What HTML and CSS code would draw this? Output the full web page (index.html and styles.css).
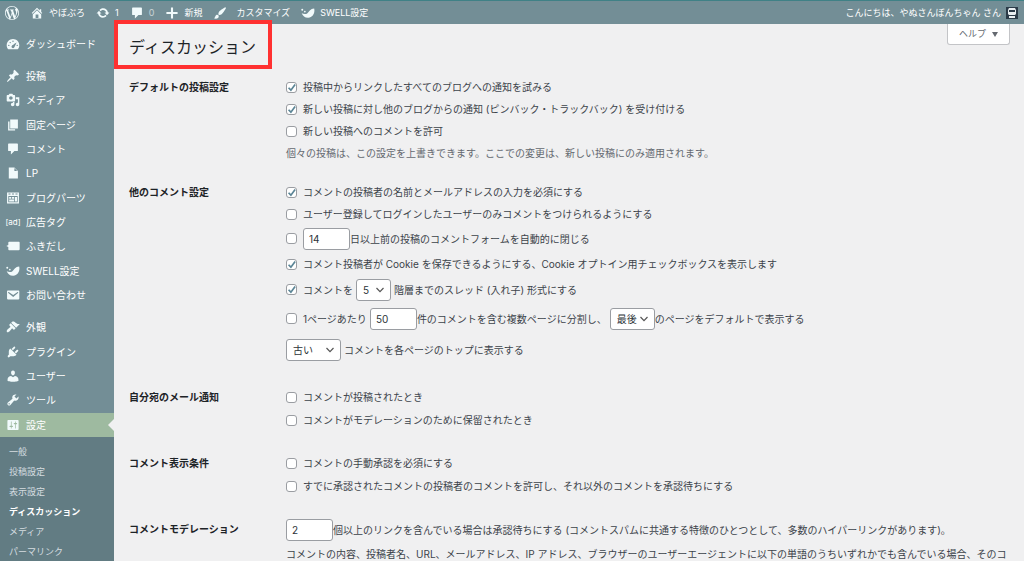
FILE: index.html
```html
<!DOCTYPE html>
<html lang="ja">
<head>
<meta charset="utf-8">
<meta name="viewport" content="width=device-width, initial-scale=1">
<title>ディスカッション</title>
<link rel="stylesheet" href="styles.css">
</head>
<body>
<svg class="sprite" aria-hidden="true">
  <symbol id="i-wp" viewBox="0 0 20 20"><path d="M20 10c0-5.51-4.49-10-10-10C4.48 0 0 4.49 0 10c0 5.52 4.48 10 10 10 5.51 0 10-4.48 10-10zM7.78 15.37L4.37 6.22c.55-.02 1.17-.08 1.17-.08.5-.06.44-1.13-.06-1.11 0 0-1.45.11-2.37.11-.18 0-.37 0-.58-.01C4.12 2.69 6.87 1.11 10 1.11c2.33 0 4.45.87 6.05 2.34-.68-.11-1.65.39-1.65 1.58 0 .74.45 1.36.9 2.1.35.61.55 1.36.55 2.46 0 1.49-1.4 5-1.4 5l-3.03-8.37c.54-.02.82-.17.82-.17.5-.05.44-1.25-.06-1.22 0 0-1.44.12-2.38.12-.87 0-2.33-.12-2.33-.12-.5-.03-.56 1.2-.06 1.22l.92.08 1.26 3.41zM17.41 10c.24-.64.74-1.87.43-4.25.7 1.29 1.05 2.71 1.05 4.25 0 3.29-1.73 6.24-4.4 7.78.97-2.59 1.94-5.2 2.92-7.78zM6.1 18.09C3.12 16.65 1.11 13.53 1.11 10c0-1.3.23-2.48.72-3.59C3.25 10.3 4.67 14.2 6.1 18.09zm4.03-6.63l2.58 6.98c-.86.29-1.76.45-2.71.45-.79 0-1.57-.11-2.29-.33.81-2.38 1.62-4.74 2.42-7.1z"/></symbol>
  <symbol id="i-home" viewBox="0 0 20 20"><path d="M16 8.5l1.53 1.53-1.06 1.06L10 4.6l-6.47 6.49-1.06-1.06L10 2.5l4 4v-2h2v4zm-6-2.46l6 5.99V18H4v-5.97zM12 17v-5H8v5h4z"/></symbol>
  <symbol id="i-update" viewBox="0 0 20 20"><path d="M10.2 3.28c3.53 0 6.43 2.61 6.92 6h2.08l-3.5 4-3.5-4h2.32c-.45-1.97-2.21-3.45-4.32-3.45-1.45 0-2.73.71-3.54 1.78L4.95 5.66C6.23 4.2 8.11 3.28 10.2 3.28zm-.4 13.44c-3.52 0-6.43-2.61-6.92-6H.8l3.5-4c1.17 1.33 2.33 2.67 3.5 4H5.48c.45 1.97 2.21 3.45 4.32 3.45 1.45 0 2.73-.71 3.54-1.78l1.71 1.95c-1.28 1.46-3.15 2.38-5.25 2.38z"/></symbol>
  <symbol id="i-comment" viewBox="0 0 20 20"><path d="M4 2h12c.55 0 1 .45 1 1v9c0 .55-.45 1-1 1h-4l-5 5v-5H4c-.55 0-1-.45-1-1V3c0-.55.45-1 1-1z"/></symbol>
  <symbol id="i-plus" viewBox="0 0 20 20"><path d="M18 8.500v3h-6.500V18h-3v-6.500H2v-3h6.500V2h3v6.500z"/></symbol>
  <symbol id="i-brush" viewBox="0 0 20 20"><path d="M18.33 3.57s.27-.8-.31-1.36c-.53-.52-1.22-.24-1.22-.24-.61.3-5.76 3.47-7.67 5.57-.86.96-2.06 3.79-1.09 4.82.92.98 3.96-.17 4.79-1 2.06-2.06 5.21-7.17 5.5-7.79zM1.4 17.65c2.37-1.56 1.46-3.41 3.23-4.64.93-.65 2.22-.62 3.08.29.63.67.8 2.57-.16 3.46-1.57 1.45-4 1.55-6.15.89z"/></symbol>
  <symbol id="i-swell" viewBox="0 0 20 20"><path d="M18.800 3.500c1.600 6.500-2 13-8.300 13.300C5.800 17 2.500 14 1 10.300c2.800 1.300 6 1.600 8.200-.1 2.800-2.200 4-6.400 9.600-6.700z"/><circle cx="1.800" cy="5.500" r="1.400"/><circle cx="5.500" cy="8" r="1.200"/></symbol>
  <symbol id="i-dash" viewBox="0 0 20 20"><path fill-rule="evenodd" d="M3.200 17.500h13.600C18.200 16 19 14 19 12c0-5-4-9-9-9s-9 4-9 9c0 2 .8 4 2.200 5.500zM9 6c0-.55.45-1 1-1s1 .45 1 1-.45 1-1 1-1-.45-1-1zM5 8c0-.55.45-1 1-1s1 .45 1 1-.45 1-1 1-1-.45-1-1zm3.520 4.400c.84-.83 6.510-4.500 6.510-4.500s-2.660 6.680-3.490 7.510c-.84.84-2.180.84-3.020 0-.83-.83-.83-2.180 0-3.010zM3 12c0-.55.45-1 1-1s1 .45 1 1-.45 1-1 1-1-.45-1-1zm12 0c0-.55.45-1 1-1s1 .45 1 1-.45 1-1 1-1-.45-1-1z"/></symbol>
  <symbol id="i-pin" viewBox="0 0 20 20"><path d="M10.44 3.02l1.82-1.82 6.36 6.35-1.83 1.82c-1.05-.68-2.48-.57-3.41.36l-.75.75c-.92.93-1.04 2.35-.35 3.41l-1.83 1.82-2.41-2.41-2.8 2.79c-.42.42-3.38 2.71-3.8 2.29s1.860-3.390 2.280-3.810l2.790-2.790L4.100 9.360l1.830-1.820c1.050.69 2.480.57 3.400-.36l.75-.75c.93-.92 1.050-2.350.36-3.410z"/></symbol>
  <symbol id="i-media" viewBox="0 0 20 20"><path d="M13 11V4c0-.55-.45-1-1-1h-1.670L9 1H5L3.670 3H2c-.55 0-1 .45-1 1v7c0 .55.45 1 1 1h10c.55 0 1-.45 1-1zM7 4.500c1.380 0 2.500 1.120 2.500 2.500S8.380 9.500 7 9.500 4.500 8.380 4.500 7 5.620 4.500 7 4.500zM14 6h5v10.500c0 1.380-1.120 2.500-2.500 2.500S14 17.880 14 16.500s1.120-2.500 2.500-2.500c.17 0 .34.02.5.05V9h-3V6zm-4 8.050V13h2v3.500c0 1.380-1.120 2.500-2.500 2.500S7 17.880 7 16.500 8.120 14 9.500 14c.17 0 .34.02.5.05z" fill-rule="evenodd"/></symbol>
  <symbol id="i-page" viewBox="0 0 20 20"><path d="M6 15V2h11v13H6zm-1 1h8v2H3V5h2v11z"/></symbol>
  <symbol id="i-doc" viewBox="0 0 20 20"><path fill-rule="evenodd" d="M12 2l5 5v11H4V2h8zm0 5h4l-4-4v4z"/></symbol>
  <symbol id="i-parts" viewBox="0 0 20 20"><path fill-rule="evenodd" d="M1.500 2h17v16h-17zM3.300 7v9.200h13.400V7zM3.500 3.700v1.300h3V3.700zM8.500 3.700v1.300h3V3.700zM13.500 3.700v1.300h3V3.700z"/><path d="M4.500 8.500h3v2.500h-3zM8.600 8.500h3v2.500h-3zM12.700 8.500h3V15h-3zM4.500 12.300h7.100V15H4.500z"/></symbol>
  <symbol id="i-balloon" viewBox="0 0 20 20"><path d="M5 4h13c1 0 1.500.6 1.500 1.500v9c0 1-.5 1.500-1.500 1.500H5c-1 0-1.700-.5-1.700-1.500v-3L.5 10l2.800-1.500v-3C3.300 4.600 4 4 5 4z"/></symbol>
  <symbol id="i-mail" viewBox="0 0 20 20"><path fill-rule="evenodd" d="M3 3.500h14.500c1 0 1.500.6 1.500 1.500v10c0 1-.5 1.500-1.500 1.500H3c-1 0-1.500-.5-1.500-1.500V5c0-.9.500-1.500 1.500-1.500zm7.250 9.500l6.900-5.700c.8-.9-.2-1.900-1.100-1.300l-5.800 4.100L4.400 6c-.9-.6-1.900.4-1.100 1.300z"/></symbol>
  <symbol id="i-look" viewBox="0 0 20 20"><path d="M14.480 11.060L7.410 3.990l1.500-1.500c.5-.56 2.300-.47 3.510.32 1.210.8 1.430 1.280 2.910 2.100 1.180.64 2.450 1.260 4.450.85zm-.71.71L6.700 4.700 4.930 6.470c-.39.39-.39 1.020 0 1.410l1.060 1.060c.39.39.39 1.030 0 1.420-.6.6-1.430 1.110-2.210 1.690-.35.26-.7.53-1.010.84C1.430 14.230.4 16.080 1.400 17.070c.99 1 2.840-.03 4.180-1.360.31-.31.58-.66.85-1.020.57-.78 1.080-1.610 1.690-2.210.39-.39 1.020-.39 1.410 0l1.060 1.060c.39.39 1.020.39 1.410 0z"/></symbol>
  <symbol id="i-plug" viewBox="0 0 20 20"><path d="M13.110 4.360L9.870 7.600 8 5.730l3.240-3.240c.35-.34 1.050-.2 1.560.32.52.51.66 1.210.31 1.550zm-8 1.770l.91-1.120 9.010 9.010-1.190.84c-.71.71-2.630 1.160-3.820 1.160H6.140L4.900 17.260c-.59.59-1.540.59-2.120 0-.59-.58-.59-1.530 0-2.120l1.240-1.240v-3.880c0-1.130.4-3.190 1.090-3.890zm7.260 3.970l3.240-3.240c.34-.35 1.040-.21 1.550.31.52.51.66 1.210.31 1.550l-3.240 3.250z"/></symbol>
  <symbol id="i-user" viewBox="0 0 20 20"><path d="M10 9.250c-2.270 0-2.730-3.440-2.730-3.440C7 4.020 7.820 2 9.970 2c2.160 0 2.980 2.020 2.710 3.810 0 0-.41 3.440-2.680 3.440zm0 2.570L12.720 10c2.390 0 5.020 2.330 5.020 4.530v2.490s-4.150 1.130-7.740 1.130c-3.650 0-7.740-1.130-7.740-1.130v-2.490c0-2.250 2.440-4.480 4.970-4.480z"/></symbol>
  <symbol id="i-tool" viewBox="0 0 20 20"><path fill-rule="evenodd" d="M16.680 9.770c-1.340 1.340-3.300 1.670-4.950.99l-5.410 6.520c-.99.99-2.590.99-3.580 0s-.99-2.590 0-3.570l6.520-5.420c-.68-1.650-.35-3.610.99-4.950 1.280-1.280 3.120-1.620 4.720-1.060l-2.890 2.890 2.820 2.820 2.860-2.870c.53 1.580.18 3.390-1.080 4.650zM3.810 16.210c.4.39 1.040.39 1.430 0 .4-.4.4-1.040 0-1.430-.39-.4-1.030-.4-1.430 0-.39.39-.39 1.030 0 1.430z"/></symbol>
  <symbol id="i-set" viewBox="0 0 20 20"><path fill-rule="evenodd" d="M18 16V4c0-.55-.45-1-1-1H3c-.55 0-1 .45-1 1v12c0 .55.45 1 1 1h14c.55 0 1-.45 1-1zM8 11h1c.55 0 1 .45 1 1s-.45 1-1 1H8v1.500c0 .28-.22.5-.5.5s-.5-.22-.5-.5V13H6c-.55 0-1-.45-1-1s.45-1 1-1h1V5.500c0-.28.22-.5.5-.5s.5.22.5.5V11zm5-2h-1c-.55 0-1-.45-1-1s.45-1 1-1h1V5.500c0-.28.22-.5.5-.5s.5.22.5.5V7h1c.55 0 1 .45 1 1s-.45 1-1 1h-1v5.500c0 .28-.22.5-.5.5s-.5-.22-.5-.5V9z"/></symbol>
</svg>

<header class="bar">
  <nav class="bar-nav" aria-label="ツールバー">
    <a href="#" aria-label="WordPress"><svg class="icon"><use href="#i-wp"/></svg></a>
    <a href="#"><svg class="icon"><use href="#i-home"/></svg>やぼぶろ</a>
    <a href="#"><svg class="icon"><use href="#i-update"/></svg>1</a>
    <a href="#"><svg class="icon"><use href="#i-comment"/></svg><span class="dim">0</span></a>
    <a href="#"><svg class="icon"><use href="#i-plus"/></svg>新規</a>
    <a href="#" class="wide"><svg class="icon"><use href="#i-brush"/></svg>カスタマイズ</a>
    <a href="#"><svg class="icon"><use href="#i-swell"/></svg>SWELL設定</a>
  </nav>
  <a href="#" class="account">こんにちは、やぬさんぼんちゃん さん
    <svg class="avatar" viewBox="0 0 12 12"><path fill="#2b3b48" d="M0 0h12v12H0z"/><path fill="#e9eff1" d="M3 1h6l1 2v4L9 8H3L2 7V3z"/><path fill="#2b3b48" d="M3 3h6v2H3z"/><path fill="#e9eff1" d="M3 9h6v2H3z"/></svg>
  </a>
</header>

<div class="shell">
  <nav class="side" aria-label="メインメニュー">
    <ul class="group">
      <li><a href="#"><svg class="icon"><use href="#i-dash"/></svg>ダッシュボード</a></li>
    </ul>
    <ul class="group group-content">
      <li><a href="#"><svg class="icon"><use href="#i-pin"/></svg>投稿</a></li>
      <li><a href="#"><svg class="icon"><use href="#i-media"/></svg>メディア</a></li>
      <li><a href="#"><svg class="icon"><use href="#i-page"/></svg>固定ページ</a></li>
      <li><a href="#"><svg class="icon"><use href="#i-comment"/></svg>コメント</a></li>
      <li><a href="#"><svg class="icon"><use href="#i-doc"/></svg>LP</a></li>
      <li><a href="#"><svg class="icon"><use href="#i-parts"/></svg>ブログパーツ</a></li>
      <li><a href="#"><span class="icon ad">[ad]</span>広告タグ</a></li>
      <li><a href="#"><svg class="icon"><use href="#i-balloon"/></svg>ふきだし</a></li>
      <li><a href="#"><svg class="icon"><use href="#i-swell"/></svg>SWELL設定</a></li>
      <li><a href="#"><svg class="icon"><use href="#i-mail"/></svg>お問い合わせ</a></li>
    </ul>
    <ul class="group group-admin">
      <li><a href="#"><svg class="icon"><use href="#i-look"/></svg>外観</a></li>
      <li><a href="#"><svg class="icon"><use href="#i-plug"/></svg>プラグイン</a></li>
      <li><a href="#"><svg class="icon"><use href="#i-user"/></svg>ユーザー</a></li>
      <li><a href="#"><svg class="icon"><use href="#i-tool"/></svg>ツール</a></li>
      <li class="active"><a href="#"><svg class="icon"><use href="#i-set"/></svg>設定</a></li>
    </ul>
    <ul class="sub">
      <li><a href="#">一般</a></li>
      <li><a href="#">投稿設定</a></li>
      <li><a href="#">表示設定</a></li>
      <li><a href="#" class="current" aria-current="page">ディスカッション</a></li>
      <li><a href="#">メディア</a></li>
      <li><a href="#">パーマリンク</a></li>
    </ul>
  </nav>

  <main class="main">
    <div class="head">
      <h1 class="title">ディスカッション</h1>
      <button type="button" class="help">ヘルプ <span class="arrow"></span></button>
    </div>
    <form class="form">
      <section class="row">
        <h2>デフォルトの投稿設定</h2>
        <div class="fields">
          <label class="line"><input type="checkbox" checked>投稿中からリンクしたすべてのブログへの通知を試みる</label>
          <label class="line"><input type="checkbox" checked>新しい投稿に対し他のブログからの通知 (ピンバック・トラックバック) を受け付ける</label>
          <label class="line"><input type="checkbox">新しい投稿へのコメントを許可</label>
          <p class="line note">個々の投稿は、この設定を上書きできます。ここでの変更は、新しい投稿にのみ適用されます。</p>
        </div>
      </section>
      <section class="row spaced">
        <h2>他のコメント設定</h2>
        <div class="fields">
          <label class="line"><input type="checkbox" checked>コメントの投稿者の名前とメールアドレスの入力を必須にする</label>
          <label class="line"><input type="checkbox">ユーザー登録してログインしたユーザーのみコメントをつけられるようにする</label>
          <div class="line tall"><input type="checkbox" id="close"><input type="text" class="num" id="days" value="14" aria-label="日数"><label for="close">日以上前の投稿のコメントフォームを自動的に閉じる</label></div>
          <label class="line medium"><input type="checkbox" checked>コメント投稿者が Cookie を保存できるようにする、Cookie オプトイン用チェックボックスを表示します</label>
          <div class="line tall"><input type="checkbox" id="thread" checked><label for="thread">コメントを</label><select class="depth" aria-label="階層"><option>5</option></select><span>階層までのスレッド (入れ子) 形式にする</span></div>
          <div class="line taller"><input type="checkbox" id="paged"><label for="paged">1ページあたり</label><input type="text" class="num after" value="50" aria-label="件数"><span>件のコメントを含む複数ページに分割し、</span><select class="default-page" aria-label="デフォルトのページ"><option>最後</option></select><span>のページをデフォルトで表示する</span></div>
          <div class="line taller"><select class="order" id="order"><option>古い</option></select><label for="order">コメントを各ページのトップに表示する</label></div>
        </div>
      </section>
      <section class="row spaced">
        <h2>自分宛のメール通知</h2>
        <div class="fields loose">
          <label class="line"><input type="checkbox">コメントが投稿されたとき</label>
          <label class="line"><input type="checkbox">コメントがモデレーションのために保留されたとき</label>
        </div>
      </section>
      <section class="row spaced">
        <h2>コメント表示条件</h2>
        <div class="fields loose">
          <label class="line"><input type="checkbox">コメントの手動承認を必須にする</label>
          <label class="line"><input type="checkbox">すでに承認されたコメントの投稿者のコメントを許可し、それ以外のコメントを承認待ちにする</label>
        </div>
      </section>
      <section class="row">
        <h2>コメントモデレーション</h2>
        <div class="fields">
          <div class="line medium"><input type="text" class="num" id="links" value="2"><label for="links">個以上のリンクを含んでいる場合は承認待ちにする (コメントスパムに共通する特徴のひとつとして、多数のハイパーリンクがあります)。</label></div>
          <p class="line medium">コメントの内容、投稿者名、URL、メールアドレス、IP アドレス、ブラウザーのユーザーエージェントに以下の単語のうちいずれかでも含んでいる場合、そのコ</p>
        </div>
      </section>
    </form>
  </main>
</div>
</body>
</html>
```
FILE: styles.css
```css
* { box-sizing: border-box; }

html, body { height: 100%; }

body {
  margin: 0;
  display: flex;
  flex-direction: column;
  overflow: hidden;
  background: #f0f0f1;
  color: #3c434a;
  font: 10px/16px Inter, "Noto Sans CJK JP", sans-serif;
  white-space: nowrap;
}

h1, h2, p, ul { margin: 0; padding: 0; }
ul { list-style: none; }
a { color: inherit; text-decoration: none; }
.sprite { display: none; }

.icon {
  width: 14px;
  height: 14px;
  flex: none;
  fill: #f1fafb;
}

/* Toolbar */
.bar {
  flex: none;
  display: flex;
  justify-content: space-between;
  height: 24px;
  padding: 0 6px 0 5px;
  border-top: 1px solid #3f8186;
  background: #738e96;
  color: #fff;
  font-size: 9px;
}
.bar-nav { display: flex; gap: 11px; }
.bar a { display: flex; align-items: center; gap: 5px; }
.bar .wide { gap: 9px; }
.dim { opacity: .6; }
.avatar { width: 12px; height: 12px; }

.shell { flex: 1; display: flex; min-height: 0; }

/* Side menu */
.side {
  flex: none;
  display: flex;
  flex-direction: column;
  width: 114px;
  padding-top: 8px;
  background: #738e96;
  color: #fff;
}
.group { flex: none; display: grid; grid-auto-rows: 1fr; min-height: 24px; margin-bottom: 8px; }
.group-content { min-height: 243px; }
.group-admin { min-height: 122px; margin-bottom: 0; }
.group a { display: flex; align-items: center; gap: 6px; height: 100%; padding-left: 6px; }
.ad { display: flex; align-items: center; justify-content: center; font-size: 8px; }
.active { position: relative; background: #9ebaa0; }
.active::after {
  content: "";
  position: absolute;
  right: 0;
  top: 50%;
  margin-top: -6px;
  border: 6px solid transparent;
  border-left-width: 0;
  border-right-color: #f0f0f1;
}
.sub { flex: 1; padding: 5px 9px 0; background: #627c83; color: #d5dde0; font-size: 9px; }
.sub a { display: block; line-height: 20px; }
.sub .current { color: #fff; font-weight: 700; }

/* Content */
.main { flex: 1; min-width: 0; padding-left: 15px; }
.head { display: flex; justify-content: space-between; align-items: flex-start; padding-right: 14px; }
.title {
  position: relative;
  padding: 11px 0 17px;
  color: #1d2327;
  font-size: 16px;
  font-weight: 400;
  line-height: 24px;
}
.title::after {
  content: "";
  position: absolute;
  inset: -4px -16px 7px -15px;
  border: 4px solid #ff3131;
}
.help {
  display: flex;
  align-items: center;
  gap: 6px;
  height: 21px;
  padding: 0 11px;
  border: 1px solid #c3c4c7;
  border-top: 0;
  border-radius: 0 0 3px 3px;
  background: #fff;
  color: #646970;
  font: inherit;
  font-size: 9px;
}
.arrow { border: 3px solid transparent; border-top: 5px solid #646970; border-bottom: 0; }

.form { display: flex; flex-direction: column; gap: 17px; }
.row { display: grid; grid-template-columns: 157px 1fr; }
.row h2 { color: #1d2327; font-size: 10px; line-height: 22px; font-weight: 700; }
.spaced { padding-bottom: 4px; }
.loose { display: grid; gap: 1px; }
.line { display: flex; align-items: center; height: 22px; }
.medium { height: 24px; }
.tall { height: 27px; }
.taller { height: 31px; }
.note { color: #646970; }

input, select {
  flex: none;
  margin: 0;
  appearance: none;
  border: 1px solid #9a9da2;
  border-radius: 3px;
  background: #fff;
  color: #2c3338;
  font: inherit;
}
input[type="checkbox"] { width: 11px; height: 11px; margin-right: 6px; }
input[type="checkbox"]:checked {
  background: #fff url("data:image/svg+xml,%3Csvg xmlns='http://www.w3.org/2000/svg' viewBox='0 0 10 10'%3E%3Cpath fill='none' stroke='%235b8596' stroke-width='1.600' d='M2 5l2.200 2.300L8.200 2'/%3E%3C/svg%3E") center / 10px 10px no-repeat;
}
.num { width: 47px; height: 22px; padding: 0 5px; }
.after { margin-left: 3px; }
select {
  height: 22px;
  padding: 0 6px;
  background: #fff url("data:image/svg+xml,%3Csvg xmlns='http://www.w3.org/2000/svg' viewBox='0 0 10 10'%3E%3Cpath fill='none' stroke='%23555' stroke-width='1.200' d='M1.500 3l3.500 3.600L8.500 3'/%3E%3C/svg%3E") right 5px center / 10px 10px no-repeat;
}
.depth { width: 35px; margin: 0 3px; }
.default-page { width: 45px; margin-left: 3px; }
.order { width: 55px; margin-right: 3px; }
```
